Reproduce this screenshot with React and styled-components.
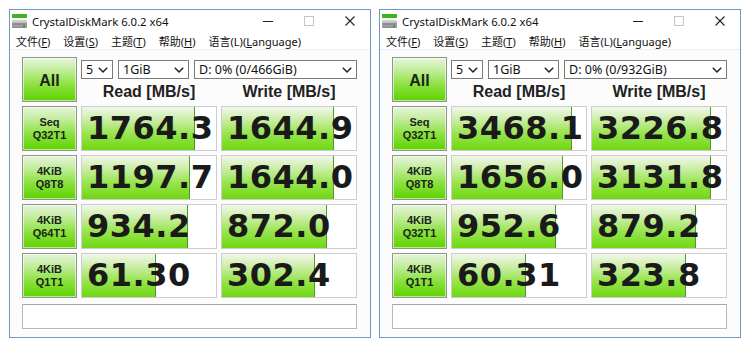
import React from 'react';
import styled, { createGlobalStyle } from 'styled-components';

const GlobalStyle = createGlobalStyle`
	html, body {
		margin: 0;
		padding: 0;
		background: #fff;
	}
	body {
		font-family: 'Noto Sans', 'Noto Sans CJK SC', sans-serif;
	}
`;

const windows = [
	{
		drive: 'D: 0% (0/466GiB)',
		rows: [
			{ top: 'Seq', bottom: 'Q32T1', read: '1764.3', rp: 0.846, write: '1644.9', wp: 0.838 },
			{ top: '4KiB', bottom: 'Q8T8', read: '1197.7', rp: 0.809, write: '1644.0', wp: 0.838 },
			{ top: '4KiB', bottom: 'Q64T1', read: '934.2', rp: 0.794, write: '872.0', wp: 0.786 },
			{ top: '4KiB', bottom: 'Q1T1', read: '61.30', rp: 0.551, write: '302.4', wp: 0.691 }
		]
	},
	{
		drive: 'D: 0% (0/932GiB)',
		rows: [
			{ top: 'Seq', bottom: 'Q32T1', read: '3468.1', rp: 0.897, write: '3226.8', wp: 0.89 },
			{ top: '4KiB', bottom: 'Q8T8', read: '1656.0', rp: 0.831, write: '3131.8', wp: 0.89 },
			{ top: '4KiB', bottom: 'Q32T1', read: '952.6', rp: 0.779, write: '879.2', wp: 0.779 },
			{ top: '4KiB', bottom: 'Q1T1', read: '60.31', rp: 0.551, write: '323.8', wp: 0.699 }
		]
	}
];

const menus = [
	{ label: '文件(', key: 'F', rest: ')' },
	{ label: '设置(', key: 'S', rest: ')' },
	{ label: '主题(', key: 'T', rest: ')' },
	{ label: '帮助(', key: 'H', rest: ')' },
	{ label: '语言(L)(', key: 'L', rest: 'anguage)' }
];

const Chevron = () => (
	<svg width="10" height="6" viewBox="0 0 10 6">
		<polyline points="0.8,0.8 5,5 9.2,0.8" fill="none" stroke="#1a1a1a" strokeWidth="1.4" />
	</svg>
);

const AppIcon = () => (
	<svg width="15" height="15" viewBox="0 0 15 15">
		<defs>
			<linearGradient id="drv" x1="0" y1="0" x2="0" y2="1">
				<stop offset="0" stopColor="#d8d8d8" />
				<stop offset="1" stopColor="#8a8a8a" />
			</linearGradient>
		</defs>
		<rect x="0" y="0" width="15" height="4" fill="#3cb521" />
		<rect x="0" y="6" width="15" height="8" rx="1" fill="url(#drv)" />
		<rect x="0.5" y="9.5" width="14" height="1" fill="#6a6a6a" />
		<rect x="11" y="11.5" width="2" height="1.5" fill="#2f8f1e" />
	</svg>
);

export default function App() {
	return (
		<>
			<GlobalStyle />
			<Page>
				{windows.map((w, i) => (
					<Window key={i}>
						<TitleBar>
							<IconSlot>
								<AppIcon />
							</IconSlot>
							<Title>CrystalDiskMark 6.0.2 x64</Title>
							<Control>
								<svg width="10" height="10" viewBox="0 0 10 10">
									<line x1="0" y1="5.5" x2="10" y2="5.5" stroke="#222" strokeWidth="1" />
								</svg>
							</Control>
							<Control>
								<svg width="10" height="10" viewBox="0 0 10 10">
									<rect x="0.5" y="0.5" width="9" height="9" fill="none" stroke="#c4c4c4" strokeWidth="1" />
								</svg>
							</Control>
							<Control>
								<svg width="10" height="10" viewBox="0 0 10 10">
									<path d="M0.5 0.5 L9.5 9.5 M9.5 0.5 L0.5 9.5" stroke="#222" strokeWidth="1.1" />
								</svg>
							</Control>
						</TitleBar>
						<MenuBar>
							{menus.map((m) => (
								<MenuItem key={m.key + m.label}>
									{m.label}
									<u>{m.key}</u>
									{m.rest}
								</MenuItem>
							))}
						</MenuBar>
						<Client>
							<LabelButton $big>All</LabelButton>
							<TopPanel>
								<ComboRow>
									<Combo $w={32}>
										<span>5</span>
										<Chevron />
									</Combo>
									<Combo $w={71}>
										<span>1GiB</span>
										<Chevron />
									</Combo>
									<Combo $w={163}>
										<span>{w.drive}</span>
										<Chevron />
									</Combo>
								</ComboRow>
								<Headers>
									<Header>Read [MB/s]</Header>
									<Header>Write [MB/s]</Header>
								</Headers>
							</TopPanel>
							{w.rows.map((r, j) => (
								<React.Fragment key={j}>
									<LabelButton>
										{r.top}
										<br />
										{r.bottom}
									</LabelButton>
									<ValueCell>
										<Bar style={{ width: `${r.rp * 100}%` }} />
										<Value>{r.read}</Value>
									</ValueCell>
									<ValueCell>
										<Bar style={{ width: `${r.wp * 100}%` }} />
										<Value>{r.write}</Value>
									</ValueCell>
								</React.Fragment>
							))}
							<Comment />
						</Client>
					</Window>
				))}
			</Page>
		</>
	);
}

const Page = styled.div`
	display: flex;
	gap: 8px;
	padding: 9px;
	width: 750px;
	height: 348px;
	box-sizing: border-box;
	background: #fff;
`;

const Window = styled.div`
	width: 362px;
	height: 329px;
	box-sizing: border-box;
	border: 1px solid #6e98c4;
	background: #fff;
	display: flex;
	flex-direction: column;
`;

const TitleBar = styled.div`
	height: 22px;
	display: flex;
	align-items: center;
	background: #fff;
`;

const IconSlot = styled.div`
	display: flex;
	margin-left: 2px;
	margin-top: 1px;
`;

const Title = styled.span`
	flex: 1;
	margin-left: 5px;
	font-size: 11.3px;
	color: #111;
	white-space: nowrap;
`;

const Control = styled.div`
	width: 41px;
	height: 22px;
	display: flex;
	align-items: center;
	justify-content: center;
`;

const MenuBar = styled.div`
	height: 17px;
	display: flex;
	align-items: center;
	padding-left: 6px;
	border-bottom: 1px solid #eceef0;
	background: #fff;
`;

const MenuItem = styled.span`
	font-size: 11px;
	color: #111;
	margin-right: 13px;
	white-space: nowrap;
	u {
		text-decoration-thickness: 1px;
		text-underline-offset: 1px;
	}
`;

const Client = styled.div`
	flex: 1;
	display: grid;
	grid-template-columns: 55px 136px 136px;
	grid-template-rows: 45px repeat(4, 45px) 27px;
	column-gap: 4px;
	row-gap: 4px;
	padding: 7px 13px 6px 12px;
	background: #fcfcfc;
`;

const LabelButton = styled.div`
	box-sizing: border-box;
	border: 1px solid #8c968a;
	box-shadow: inset 0 0 0 1px rgba(255, 255, 255, 0.55);
	background: linear-gradient(to bottom, #e6f5dc 0%, #c0ec98 30%, #8ce240 62%, #5ed200 100%);
	display: flex;
	align-items: center;
	justify-content: center;
	text-align: center;
	font-family: 'Liberation Sans', Arial, sans-serif;
	font-weight: bold;
	font-size: ${(p) => (p.$big ? '16px' : '11px')};
	line-height: ${(p) => (p.$big ? '16px' : '12.5px')};
	color: #1b2418;
	padding-top: ${(p) => (p.$big ? '2px' : '0')};
`;

const TopPanel = styled.div`
	grid-column: 2 / 4;
	display: flex;
	flex-direction: column;
`;

const ComboRow = styled.div`
	display: flex;
	gap: 5px;
	margin-top: 3px;
`;

const Combo = styled.div`
	width: ${(p) => p.$w}px;
	height: 19px;
	box-sizing: border-box;
	border: 1px solid #7a7a7a;
	background: #fff;
	display: flex;
	align-items: center;
	justify-content: space-between;
	padding: 0 4px 0 4px;
	font-size: 12.5px;
	color: #111;
	white-space: nowrap;
	svg {
		flex-shrink: 0;
	}
`;

const Headers = styled.div`
	flex: 1;
	display: grid;
	grid-template-columns: 1fr 1fr;
	column-gap: 4px;
	align-items: center;
`;

const Header = styled.div`
	text-align: center;
	font-family: 'Liberation Sans', Arial, sans-serif;
	font-weight: bold;
	font-size: 16px;
	color: #222;
	padding-top: 3px;
`;

const ValueCell = styled.div`
	position: relative;
	box-sizing: border-box;
	border: 1px solid #cdcdcd;
	background: #fff;
	display: flex;
	align-items: center;
	overflow: hidden;
`;

const Bar = styled.div`
	position: absolute;
	left: 0;
	top: 0;
	bottom: 0;
	box-sizing: border-box;
	border-right: 1px solid #4f9a2c;
	background: linear-gradient(to bottom, #f1f7ea 0%, #cdeeaa 28%, #98e44e 62%, #6fd812 100%);
`;

const Value = styled.span`
	position: relative;
	padding-left: 5px;
	padding-bottom: 1px;
	font-family: 'DejaVu Sans', Verdana, sans-serif;
	font-weight: bold;
	font-size: 32px;
	letter-spacing: 0.5px;
	color: #1a1a1a;
	white-space: nowrap;
	line-height: 1;
`;

const Comment = styled.div`
	grid-column: 1 / 4;
	margin-top: 2px;
	box-sizing: border-box;
	border: 1px solid #b8b8b8;
	border-top-color: #a6a6a6;
	background: #fff;
`;
